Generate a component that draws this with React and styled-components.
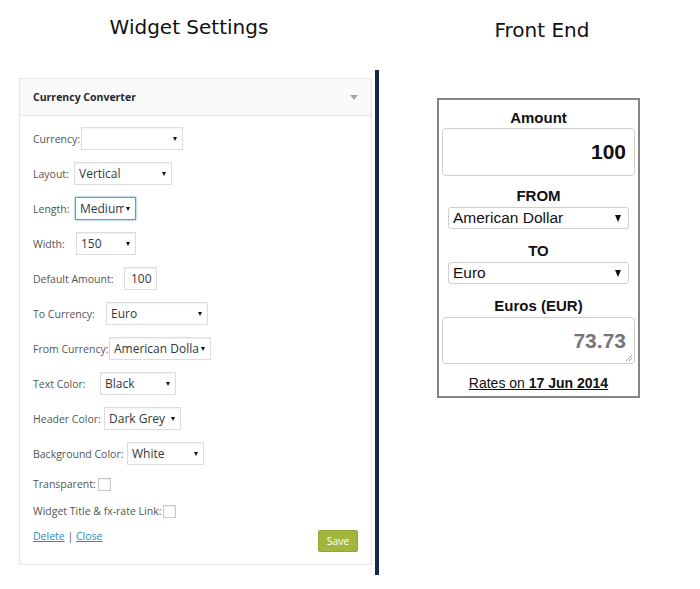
import React from "react";
import styled, { createGlobalStyle } from "styled-components";

const GlobalStyle = createGlobalStyle`
  html, body {
    margin: 0;
    padding: 0;
    background: #fff;
  }
  body {
    width: 700px;
    height: 589px;
    overflow: hidden;
  }
`;

const Page = styled.div`
  display: flex;
  width: 700px;
  height: 589px;
`;

const LeftColumn = styled.div`
  width: 375px;
  display: flex;
  flex-direction: column;
`;

const Heading = styled.h2`
  margin: ${(p) => p.$top}px 0 0;
  font-family: "DejaVu Sans", Verdana, sans-serif;
  font-weight: normal;
  font-size: 20px;
  line-height: 24px;
  color: #111;
  text-align: center;
  padding-left: ${(p) => p.$shift || 0}px;
`;

const Divider = styled.div`
  width: 4px;
  margin-top: 70px;
  height: 505px;
  background: #14284a;
`;

const RightColumn = styled.div`
  flex: 1;
  display: flex;
  flex-direction: column;
`;

/* ---------- widget settings panel ---------- */

const Panel = styled.div`
  margin: 39px 0 0 19px;
  width: 353px;
  box-sizing: border-box;
  border: 1px solid #e5e5e5;
  font-family: "Open Sans", "Noto Sans", sans-serif;
  background: #fff;
`;

const PanelHeader = styled.div`
  height: 36px;
  display: flex;
  align-items: center;
  justify-content: space-between;
  padding: 0 13px;
  background: #fafafa;
  border-bottom: 1px solid #e5e5e5;
`;

const PanelTitle = styled.span`
  font-size: 10.5px;
  font-weight: 700;
  color: #23282d;
`;

const Toggle = styled.span`
  width: 0;
  height: 0;
  border-left: 4px solid transparent;
  border-right: 4px solid transparent;
  border-top: 5px solid #a0a5aa;
`;

const PanelBody = styled.div`
  padding: 11px 13px 12px 13px;
  display: flex;
  flex-direction: column;
`;

const Row = styled.div`
  display: flex;
  align-items: center;
  height: ${(p) => p.$h || 23}px;
  margin-bottom: ${(p) => p.$mb ?? 12}px;
`;

const Label = styled.span`
  width: ${(p) => p.$w}px;
  flex-shrink: 0;
  font-size: 10.5px;
  color: #555;
  white-space: nowrap;
`;

const SelectBox = styled.div`
  display: flex;
  align-items: center;
  box-sizing: border-box;
  width: ${(p) => p.$w}px;
  height: 23px;
  padding: 0 5px 0 4px;
  background: #fff;
  border: 1px solid ${(p) => (p.$focus ? "#5b9dd9" : "#ddd")};
  box-shadow: ${(p) =>
    p.$focus ? "0 0 2px rgba(30,140,190,.8)" : "inset 0 1px 2px rgba(0,0,0,.06)"};
  font-size: 12px;
  color: #32373c;
`;

const SelectText = styled.span`
  flex: 1;
  overflow: hidden;
  white-space: nowrap;
`;

const Caret = styled.span`
  flex-shrink: 0;
  width: 0;
  height: 0;
  margin-left: 2px;
  border-left: 2px solid transparent;
  border-right: 2px solid transparent;
  border-top: 4px solid #111;
`;

const TextInput = styled.div`
  box-sizing: border-box;
  width: 33px;
  height: 23px;
  display: flex;
  align-items: center;
  padding-left: 6px;
  border: 1px solid #ddd;
  box-shadow: inset 0 1px 2px rgba(0, 0, 0, 0.06);
  font-size: 12px;
  color: #32373c;
`;

const Checkbox = styled.span`
  box-sizing: border-box;
  width: 13px;
  height: 13px;
  border: 1px solid #c8c8c8;
  background: #fff;
  box-shadow: inset 0 1px 2px rgba(0, 0, 0, 0.08);
`;

const Footer = styled.div`
  display: flex;
  justify-content: space-between;
  align-items: flex-start;
`;

const Links = styled.div`
  font-size: 10.5px;
  color: #666;
  line-height: 14px;
  margin-top: -1px;
`;

const ActionLink = styled.a`
  color: #2e8ab8;
  text-decoration: underline;
  cursor: pointer;
`;

const SaveButton = styled.button`
  width: 40px;
  height: 22px;
  border: 1px solid #93a534;
  border-radius: 2px;
  background: #a2b53c;
  color: #fff;
  font-family: "Open Sans", "Noto Sans", sans-serif;
  font-size: 10.5px;
  padding: 0;
  cursor: pointer;
`;

/* ---------- front end widget ---------- */

const Widget = styled.div`
  margin: 56px 0 0 58px;
  width: 203px;
  box-sizing: border-box;
  border: 2px solid #848484;
  padding: 0 3px 4px;
  font-family: "Liberation Sans", Arial, sans-serif;
  color: #111;
  text-align: center;
`;

const WidgetLabel = styled.div`
  margin-top: ${(p) => p.$mt}px;
  font-size: 15px;
  font-weight: 700;
  line-height: 18px;
`;

const AmountBox = styled.div`
  margin-top: ${(p) => p.$mt || 1}px;
  height: ${(p) => p.$h}px;
  box-sizing: border-box;
  border: 1px solid #cfcfcf;
  border-radius: 4px;
  display: flex;
  align-items: center;
  justify-content: flex-end;
  padding-right: 8px;
  font-size: 21px;
  font-weight: 700;
  color: ${(p) => (p.$muted ? "#777" : "#111")};
  position: relative;
`;

const Grip = styled.svg`
  position: absolute;
  right: 1px;
  bottom: 1px;
`;

const WidgetSelect = styled.div`
  margin: 2px 6px 0;
  height: 22px;
  box-sizing: border-box;
  border: 1px solid #cfcfcf;
  border-radius: 3px;
  display: flex;
  align-items: center;
  justify-content: space-between;
  padding: 0 7px 0 4px;
  font-size: 15.5px;
  color: #111;
  text-align: left;
`;

const Arrow = styled.span`
  width: 0;
  height: 0;
  border-left: 3.5px solid transparent;
  border-right: 3.5px solid transparent;
  border-top: 7px solid #111;
`;

const Rates = styled.a`
  display: block;
  margin-top: 10px;
  font-size: 14px;
  line-height: 18px;
  color: #111;
  text-decoration: underline;
`;

const Select = ({ w, value, focus }) => (
  <SelectBox $w={w} $focus={focus}>
    <SelectText>{value}</SelectText>
    <Caret />
  </SelectBox>
);

const fields = [
  { label: "Currency:", lw: 48, w: 102, value: "" },
  { label: "Layout:", lw: 41, w: 98, value: "Vertical" },
  { label: "Length:", lw: 42, w: 61, value: "Medium", focus: true },
  { label: "Width:", lw: 43, w: 60, value: "150" },
  { label: "Default Amount:", lw: 91, input: "100" },
  { label: "To Currency:", lw: 73, w: 102, value: "Euro" },
  { label: "From Currency:", lw: 76, w: 102, value: "American Dollar" },
  { label: "Text Color:", lw: 67, w: 76, value: "Black" },
  { label: "Header Color:", lw: 71, w: 77, value: "Dark Grey" },
  { label: "Background Color:", lw: 94, w: 77, value: "White" },
];

const App = () => {
  return (
    <>
      <GlobalStyle />
      <Page>
        <LeftColumn>
          <Heading $top={15} $shift={3}>Widget Settings</Heading>
          <Panel>
            <PanelHeader>
              <PanelTitle>Currency Converter</PanelTitle>
              <Toggle />
            </PanelHeader>
            <PanelBody>
              {fields.map((f) => (
                <Row key={f.label} $mb={12}>
                  <Label $w={f.lw}>{f.label}</Label>
                  {f.input ? (
                    <TextInput>{f.input}</TextInput>
                  ) : (
                    <Select w={f.w} value={f.value} focus={f.focus} />
                  )}
                </Row>
              ))}
              <Row $h={14} $mb={13}>
                <Label $w={65}>Transparent:</Label>
                <Checkbox />
              </Row>
              <Row $h={14} $mb={12}>
                <Label $w={130}>Widget Title &amp; fx-rate Link:</Label>
                <Checkbox />
              </Row>
              <Footer>
                <Links>
                  <ActionLink>Delete</ActionLink> | <ActionLink>Close</ActionLink>
                </Links>
                <SaveButton>Save</SaveButton>
              </Footer>
            </PanelBody>
          </Panel>
        </LeftColumn>
        <Divider />
        <RightColumn>
          <Heading $top={18} $shift={5}>Front End</Heading>
          <Widget>
            <WidgetLabel $mt={9}>Amount</WidgetLabel>
            <AmountBox $h={48}>100</AmountBox>
            <WidgetLabel $mt={11}>FROM</WidgetLabel>
            <WidgetSelect>
              American Dollar
              <Arrow />
            </WidgetSelect>
            <WidgetLabel $mt={13}>TO</WidgetLabel>
            <WidgetSelect>
              Euro
              <Arrow />
            </WidgetSelect>
            <WidgetLabel $mt={13}>Euros (EUR)</WidgetLabel>
            <AmountBox $h={47} $mt={2} $muted>
              73.73
              <Grip width="9" height="9" viewBox="0 0 9 9">
                <path d="M8 2 L2 8 M8 5 L5 8" stroke="#999" strokeWidth="1" />
              </Grip>
            </AmountBox>
            <Rates>
              Rates on <b>17 Jun 2014</b>
            </Rates>
          </Widget>
        </RightColumn>
      </Page>
    </>
  );
};

export default App;
